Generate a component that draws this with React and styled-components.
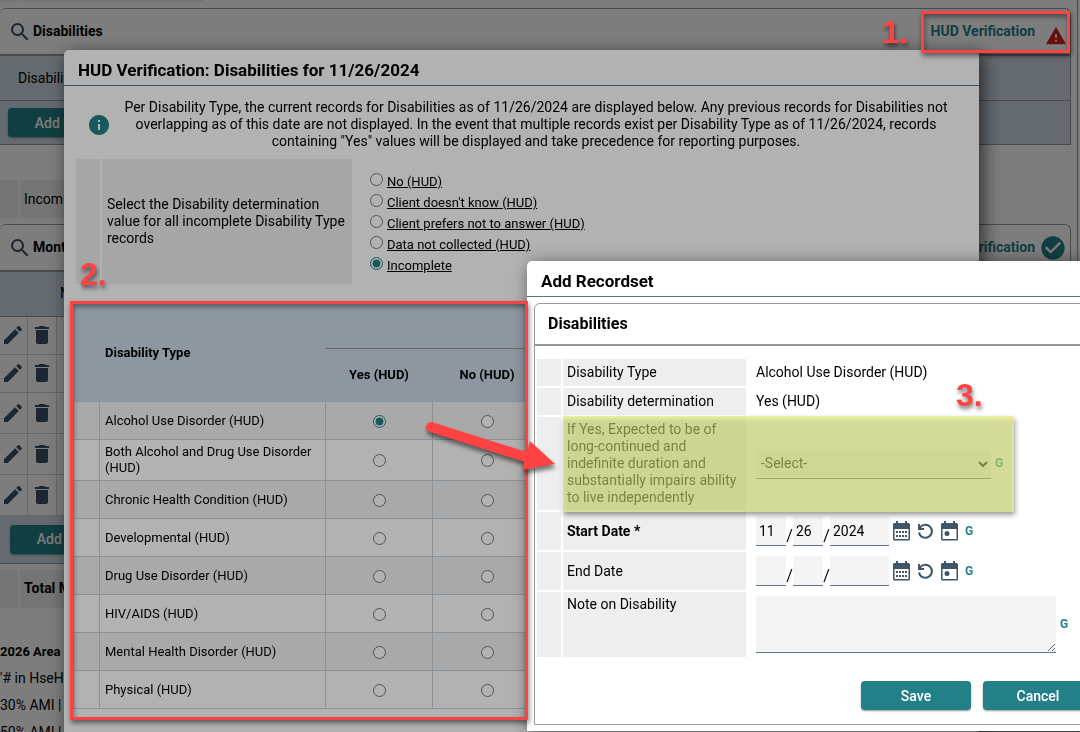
import React from "react";
import styled, { createGlobalStyle } from "styled-components";
import {
  MdCheckCircle,
  MdDelete,
  MdEdit,
  MdInfo,
  MdSearch,
  MdWarning,
} from "react-icons/md";

const GlobalStyle = createGlobalStyle`
  * {
    box-sizing: border-box;
  }

  body {
    margin: 0;
    overflow: hidden;
    background: #fff;
    color: #000;
    font-family: Roboto, "Liberation Sans", sans-serif;
    font-size: 14px;
    line-height: 17px;
  }

  button, input, select, textarea {
    font-family: inherit;
    font-size: 14px;
    color: inherit;
  }
`;

/* ---------- page behind the dialogs ---------- */

const Page = styled.main`
  height: 100vh;
  margin-right: 2px;
  padding-right: 6px;
  border-right: 1px solid #999;
  overflow: hidden;
`;

const LabelRow = styled.div`
  display: flex;
  gap: 2px;
  height: ${({ $height }) => $height}px;
  margin-bottom: ${({ $gap }) => $gap}px;
`;

const LabelGutter = styled.div`
  width: 18px;
  background: #eee;
`;

const LabelText = styled.div`
  display: flex;
  align-items: center;
  width: 183px;
  padding-left: 4px;
  background: #eee;
  font-weight: ${({ $bold }) => ($bold ? 700 : 400)};
`;

const Card = styled.section`
  border: 1px solid #999;
  border-left: 0;
  border-radius: 6px 6px 0 0;
  margin-bottom: ${({ $gap }) => $gap}px;
`;

const CardHeader = styled.header`
  display: flex;
  align-items: center;
  height: 47px;
  padding: 0 3px 0 8px;
  border-bottom: 2px solid #999;

  svg {
    flex: none;
  }
`;

const CardTitle = styled.h2`
  flex: 1;
  margin: 0 0 0 1px;
  font-size: 14px;
`;

const VerifyLink = styled.a`
  color: #238086;
  font-weight: 700;
  text-decoration: none;
`;

const StatusIcon = styled.span`
  display: flex;
  justify-content: flex-end;
  width: 32px;
  padding-top: ${({ $drop }) => $drop || 0}px;
  color: ${({ $color }) => $color};
`;

const Band = styled.div`
  display: flex;
  align-items: center;
  height: ${({ $height }) => $height}px;
  padding-left: ${({ $indent }) => $indent}px;
  background: #cdd9e4;
  border-bottom: ${({ $line }) => ($line ? "1px solid #999" : 0)};
`;

const RecordTable = styled.table`
  width: 100%;
  border-collapse: collapse;
  table-layout: fixed;

  th {
    height: 44px;
    padding: 0;
    background: #cdd9e4;
    border-right: 1px solid #c4d2df;
    border-bottom: 1px solid #999;
    font-weight: 400;
    text-align: left;
  }

  td {
    height: 38px;
    padding: 0;
    border-right: 1px solid #c4d2df;
    border-bottom: 1px solid #c4d2df;
    color: #3a5165;
  }

  tr.tall td {
    height: 41px;
  }

  svg {
    display: block;
    margin: 0 auto;
  }
`;

const Button = styled.button`
  width: 110px;
  height: 29px;
  padding: 0;
  border: 0;
  border-radius: 4px;
  background: #238086;
  box-shadow: 0 1px 2px rgba(0, 0, 0, 0.4);
  color: #fff;
  font-weight: 500;
`;

const Footnotes = styled.div`
  padding-top: 31px;

  p {
    margin: 0 0 10px;
  }

  b {
    font-size: 13px;
  }
`;

/* ---------- dialogs ---------- */

const Shade = styled.div`
  position: fixed;
  inset: 0;
  background: rgba(0, 0, 0, 0.3);
`;

const Dialog = styled.section`
  position: fixed;
  display: flex;
  flex-direction: column;
  top: ${({ $top }) => $top}px;
  left: ${({ $left }) => $left}px;
  right: ${({ $right }) => $right}px;
  bottom: ${({ $bottom }) => $bottom}px;
  background: #fff;
  border-radius: 5px 5px 0 0;
  box-shadow: 4px 4px 18px rgba(0, 0, 0, 0.65);
  overflow: hidden;
`;

const DialogTitle = styled.h1`
  display: flex;
  align-items: center;
  flex: none;
  height: 36px;
  margin: 0;
  padding: 5px 14px 0;
  border-bottom: 1px solid #5f7486;
  font-size: 17px;
`;

const Notice = styled.div`
  display: flex;
  align-items: center;
  margin: 13px 27px 9px 23px;

  svg {
    flex: none;
    color: #238086;
  }

  p {
    flex: 1;
    margin: 0 0 0 9px;
    text-align: center;
  }
`;

const BulkRow = styled.div`
  display: grid;
  grid-template-columns: 24px 250px 1fr;
  gap: 2px;
  height: 125px;
  margin-left: 12px;
`;

const BulkLabel = styled.div`
  display: flex;
  align-items: center;
  padding: 0 4px 0 5px;
  background: #eee;
`;

const BulkOptions = styled.div`
  display: flex;
  flex-direction: column;
  padding: 12px 0 0 16px;
`;

const RadioLabel = styled.label`
  display: flex;
  align-items: flex-start;
  gap: 4px;
  height: 21px;
  font-size: 13px;
  line-height: 21px;
  text-decoration: underline;

  input {
    margin: 2px 0 0;
  }
`;

const Radio = styled.input.attrs({ type: "radio" })`
  width: 13px;
  height: 13px;
  margin: 0;
  vertical-align: middle;
  accent-color: #238086;
`;

const TypeTable = styled.table`
  width: 890px;
  margin: 20px 0 0 9px;
  border-collapse: collapse;
  table-layout: fixed;
  font-size: 13px;
  line-height: 16px;

  th,
  td {
    height: 38px;
    padding: 0 5px;
    border: 1px solid #c4d2df;
    text-align: center;
  }

  th {
    background: #ccd9e6;
    border-color: #c8d5e2;
  }

  thead tr:first-child th {
    height: 44px;
  }

  thead tr:last-child th {
    height: 53px;
  }

  thead tr:first-child th:last-child {
    border-bottom-color: #999;
  }

  tbody tr:first-child td {
    border-top-color: #999;
  }

  tbody tr:nth-child(odd) {
    background: #f2f2f2;
  }

  tbody tr.double td {
    height: 41px;
  }

  th.name,
  td.name {
    text-align: left;
  }
`;

const FormCard = styled.form`
  display: flex;
  flex-direction: column;
  flex: 1;
  margin: 6px 7px 6px 7px;
  border: 1px solid #999;
  border-radius: 6px 6px 0 0;
`;

const FormTitle = styled.h2`
  display: flex;
  align-items: center;
  height: 42px;
  margin: 0 0 13px;
  padding: 0 0 2px 13px;
  border-bottom: 2px solid #999;
  font-size: 16px;
`;

const FieldRow = styled.div`
  display: grid;
  grid-template-columns: 24px 183px 1fr;
  gap: 2px;
  min-height: ${({ $height }) => $height}px;
  margin: 0 0 2px 2px;
`;

const Gutter = styled.div`
  background: #eee;
`;

const FieldLabel = styled.label`
  display: flex;
  align-items: ${({ $top }) => ($top ? "flex-start" : "center")};
  padding: 4px;
  background: #eee;
  font-size: 14px;
  font-weight: ${({ $bold }) => ($bold ? 700 : 400)};
`;

const FieldValue = styled.div`
  display: flex;
  align-items: center;
  padding-left: 8px;
`;

const fieldSkin = `
  height: 30px;
  padding: 0 3px;
  border: 0;
  border-bottom: 1px solid #5f7486;
  border-radius: 2px 2px 0 0;
  background: #f4f4f4;
`;

const Select = styled.select`
  ${fieldSkin}
  width: 235px;
  padding: 0 1px;
`;

const DateBox = styled.input`
  ${fieldSkin}
  width: ${({ $wide }) => ($wide ? 59 : 30)}px;
`;

const Slash = styled.span`
  width: 7px;
  padding-top: 8px;
  text-align: center;
  font-size: 16px;
`;

const IconButton = styled.button`
  display: flex;
  justify-content: center;
  width: 24px;
  padding: 0;
  border: 0;
  background: none;
  color: #3d5566;
`;

const Guide = styled.a`
  margin-left: 4px;
  color: #238086;
  font-size: 12px;
  font-weight: 700;
  text-decoration: none;
`;

const Note = styled.textarea`
  ${fieldSkin}
  width: 300px;
  height: 57px;
`;

const Actions = styled.div`
  display: flex;
  justify-content: flex-end;
  gap: 12px;
  margin: 22px 9px 0;
`;

/* ---------- callouts drawn over everything ---------- */

const Outline = styled.div`
  position: fixed;
  top: ${({ $top }) => $top}px;
  left: ${({ $left }) => $left}px;
  width: ${({ $width }) => $width}px;
  height: ${({ $height }) => $height}px;
  border: 3px solid #ff4242;
  box-shadow: 1px 3px 5px rgba(0, 0, 0, 0.5),
    inset 1px 3px 5px rgba(0, 0, 0, 0.4);
  pointer-events: none;
`;

const StepNumber = styled.span`
  position: fixed;
  top: ${({ $top }) => $top}px;
  left: ${({ $left }) => $left}px;
  color: #ff4242;
  font: 700 32px/32px "Liberation Sans", Arial, sans-serif;
  text-shadow: 1px 3px 4px rgba(0, 0, 0, 0.55);
`;

const Highlight = styled.div`
  position: fixed;
  top: 416px;
  left: 563px;
  width: 451px;
  height: 96px;
  background: rgba(189, 200, 98, 0.65);
  box-shadow: 1px 3px 5px rgba(0, 0, 0, 0.4),
    inset 0 3px 4px rgba(255, 255, 170, 0.6);
  pointer-events: none;
`;

const Arrow = styled.svg`
  position: fixed;
  top: 415px;
  left: 420px;
  filter: drop-shadow(1px 4px 2px rgba(0, 0, 0, 0.5));
  pointer-events: none;
`;

const incomeRows = ["", "", "tall", "tall", "tall"];

const bulkOptions = [
  "No (HUD)",
  "Client doesn't know (HUD)",
  "Client prefers not to answer (HUD)",
  "Data not collected (HUD)",
  "Incomplete",
];

const disabilityTypes = [
  "Alcohol Use Disorder (HUD)",
  "Both Alcohol and Drug Use Disorder (HUD)",
  "Chronic Health Condition (HUD)",
  "Developmental (HUD)",
  "Drug Use Disorder (HUD)",
  "HIV/AIDS (HUD)",
  "Mental Health Disorder (HUD)",
  "Physical (HUD)",
];

function CalendarIcon({ today }) {
  return (
    <svg width="17" height="20" viewBox="0 0 17 20" fill="currentColor">
      <path
        fillRule="evenodd"
        d="M3 0h2v2h7V0h2v2h1.5A1.5 1.5 0 0 1 17 3.500v14.500a1.500 1.500 0 0 1-1.500 1.500h-14A1.500 1.500 0 0 1 0 18V3.500A1.500 1.500 0 0 1 1.500 2H3zM1.500 8v10h14V8z"
      />
      {today ? (
        <circle cx="6" cy="12.500" r="2.500" />
      ) : (
        <path d="M3 10h2v2H3zM6 10h2v2H6zM9 10h2v2H9zM12 10h2v2h-2zM3 14h2v2H3zM6 14h2v2H6zM9 14h2v2H9zM12 14h2v2h-2z" />
      )}
    </svg>
  );
}

function UndoIcon() {
  return (
    <svg
      width="17"
      height="17"
      viewBox="0 0 17 17"
      fill="none"
      stroke="currentColor"
      strokeWidth="2"
    >
      <path d="M2.500 5.500A6.500 6.500 0 1 1 2 9.500" />
      <path d="M2 1v5h5" />
    </svg>
  );
}

function DateField({ name, value = ["", "", ""] }) {
  return (
    <FieldValue>
      <DateBox id={name} aria-label={`${name} month`} defaultValue={value[0]} />
      <Slash>/</Slash>
      <DateBox aria-label={`${name} day`} defaultValue={value[1]} />
      <Slash>/</Slash>
      <DateBox $wide aria-label={`${name} year`} defaultValue={value[2]} />
      <IconButton type="button" aria-label="Calendar">
        <CalendarIcon />
      </IconButton>
      <IconButton type="button" aria-label="Reset">
        <UndoIcon />
      </IconButton>
      <IconButton type="button" aria-label="Today">
        <CalendarIcon today />
      </IconButton>
      <Guide href="#">G</Guide>
    </FieldValue>
  );
}

function Background() {
  return (
    <Page>
      <LabelRow $height={2} $gap={6}>
        <LabelGutter />
        <LabelText />
      </LabelRow>
      <Card $gap={35}>
        <CardHeader>
          <MdSearch size={24} color="#3a5165" />
          <CardTitle>Disabilities</CardTitle>
          <VerifyLink href="#">HUD Verification</VerifyLink>
          <StatusIcon $color="#d21f1f" $drop={8}>
            <MdWarning size={22} />
          </StatusIcon>
        </CardHeader>
        <Band $height={45} $indent={18} $line>
          Disability
        </Band>
        <Band $height={43} $indent={8}>
          <Button>Add New</Button>
        </Band>
      </Card>
      <LabelRow $height={38} $gap={6}>
        <LabelGutter />
        <LabelText>Income</LabelText>
      </LabelRow>
      <Card $gap={6}>
        <CardHeader>
          <MdSearch size={24} color="#3a5165" />
          <CardTitle>Monthly</CardTitle>
          <VerifyLink href="#">HUD Verification</VerifyLink>
          <StatusIcon $color="#238086">
            <MdCheckCircle size={28} />
          </StatusIcon>
        </CardHeader>
        <RecordTable>
          <colgroup>
            <col style={{ width: 27 }} />
            <col style={{ width: 29 }} />
            <col />
          </colgroup>
          <thead>
            <tr>
              <th />
              <th />
              <th>&nbsp;M</th>
            </tr>
          </thead>
          <tbody>
            {incomeRows.map((size, i) => (
              <tr key={i} className={size}>
                <td>
                  <MdEdit size={24} />
                </td>
                <td>
                  <MdDelete size={24} />
                </td>
                <td />
              </tr>
            ))}
          </tbody>
        </RecordTable>
        <Band $height={47} $indent={10}>
          <Button>Add New</Button>
        </Band>
      </Card>
      <LabelRow $height={38} $gap={4}>
        <LabelGutter />
        <LabelText $bold>Total Monthly</LabelText>
      </LabelRow>
      <Footnotes>
        <p>
          <b>2026 Area</b>
        </p>
        <p>'# in HseHold</p>
        <p>30% AMI |</p>
        <p>50% AMI |</p>
      </Footnotes>
    </Page>
  );
}

function VerificationDialog() {
  return (
    <Dialog $top={50} $left={64} $right={101} $bottom={-20}>
      <DialogTitle>HUD Verification: Disabilities for 11/26/2024</DialogTitle>
      <Notice>
        <MdInfo size={24} />
        <p>
          Per Disability Type, the current records for Disabilities as of
          11/26/2024 are displayed below. Any previous records for Disabilities
          not overlapping as of this date are not displayed. In the event that
          multiple records exist per Disability Type as of 11/26/2024, records
          containing "Yes" values will be displayed and take precedence for
          reporting purposes.
        </p>
      </Notice>
      <BulkRow>
        <Gutter />
        <BulkLabel>
          Select the Disability determination value for all incomplete
          Disability Type records
        </BulkLabel>
        <BulkOptions>
          {bulkOptions.map((option) => (
            <RadioLabel key={option}>
              <Radio name="bulk" defaultChecked={option === "Incomplete"} />
              {option}
            </RadioLabel>
          ))}
        </BulkOptions>
      </BulkRow>
      <TypeTable>
        <colgroup>
          <col style={{ width: 26 }} />
          <col style={{ width: 226 }} />
          <col style={{ width: 107 }} />
          <col style={{ width: 109 }} />
          <col />
        </colgroup>
        <thead>
          <tr>
            <th rowSpan={2} />
            <th rowSpan={2} className="name">
              Disability Type
            </th>
            <th colSpan={3} />
          </tr>
          <tr>
            <th>Yes (HUD)</th>
            <th>No (HUD)</th>
            <th />
          </tr>
        </thead>
        <tbody>
          {disabilityTypes.map((type, i) => (
            <tr key={type} className={i === 1 ? "double" : undefined}>
              <td />
              <td className="name">{type}</td>
              <td>
                <Radio
                  name={type}
                  aria-label={`${type}: Yes`}
                  defaultChecked={i === 0}
                />
              </td>
              <td>
                <Radio name={type} aria-label={`${type}: No`} />
              </td>
              <td />
            </tr>
          ))}
        </tbody>
      </TypeTable>
    </Dialog>
  );
}

function RecordsetDialog() {
  return (
    <Dialog $top={261} $left={527} $right={-30} $bottom={1}>
      <DialogTitle>Add Recordset</DialogTitle>
      <FormCard>
        <FormTitle>Disabilities</FormTitle>
        <FieldRow $height={27}>
          <Gutter />
          <FieldLabel as="div">Disability Type</FieldLabel>
          <FieldValue>Alcohol Use Disorder (HUD)</FieldValue>
        </FieldRow>
        <FieldRow $height={27}>
          <Gutter />
          <FieldLabel as="div">Disability determination</FieldLabel>
          <FieldValue>Yes (HUD)</FieldValue>
        </FieldRow>
        <FieldRow $height={93}>
          <Gutter />
          <FieldLabel htmlFor="expected">
            If Yes, Expected to be of long-continued and indefinite duration and
            substantially impairs ability to live independently
          </FieldLabel>
          <FieldValue>
            <Select id="expected">
              <option>-Select-</option>
            </Select>
            <Guide href="#">G</Guide>
          </FieldValue>
        </FieldRow>
        <FieldRow $height={38}>
          <Gutter />
          <FieldLabel $bold htmlFor="start">
            Start Date *
          </FieldLabel>
          <DateField name="start" value={["11", "26", "2024"]} />
        </FieldRow>
        <FieldRow $height={38}>
          <Gutter />
          <FieldLabel htmlFor="end">End Date</FieldLabel>
          <DateField name="end" />
        </FieldRow>
        <FieldRow $height={65}>
          <Gutter />
          <FieldLabel $top htmlFor="note">
            Note on Disability
          </FieldLabel>
          <FieldValue>
            <Note id="note" />
            <Guide href="#">G</Guide>
          </FieldValue>
        </FieldRow>
        <Actions>
          <Button type="button">Save</Button>
          <Button type="button">Cancel</Button>
        </Actions>
      </FormCard>
    </Dialog>
  );
}

export default function App() {
  return (
    <>
      <GlobalStyle />
      <Background />
      <Shade />
      <VerificationDialog />
      <Shade />
      <RecordsetDialog />
      <Highlight />
      <Outline $top={11} $left={921} $width={149} $height={42} />
      <Outline $top={301} $left={70} $width={458} $height={419} />
      <StepNumber $top={16} $left={882}>
        1.
      </StepNumber>
      <StepNumber $top={258} $left={80}>
        2.
      </StepNumber>
      <StepNumber $top={379} $left={956}>
        3.
      </StepNumber>
      <Arrow width="145" height="70" viewBox="0 0 145 70">
        <path d="M11 12L112 44" stroke="#ff4242" strokeWidth="10" strokeLinecap="round" />
        <path d="M110 26L135 49L102 55z" fill="#ff4242" />
      </Arrow>
    </>
  );
}
